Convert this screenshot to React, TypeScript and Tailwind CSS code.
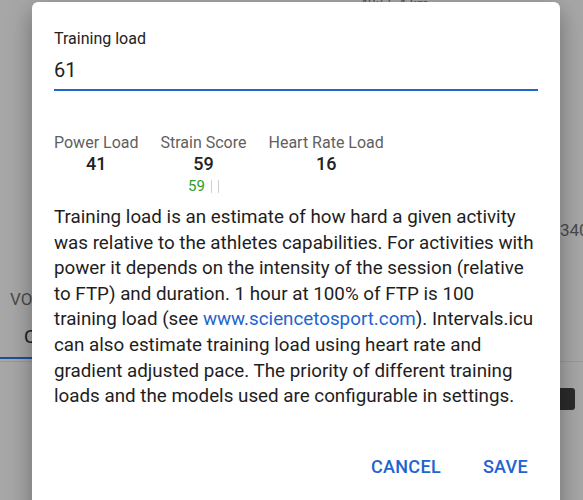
import React from 'react';

const font = { fontFamily: 'Roboto, "Noto Sans", sans-serif' };

function Stat({ label, value, extra }: { label: string; value: string; extra?: React.ReactNode }) {
  return (
    <div className="flex flex-col items-center">
      <div className="text-[16px] leading-[20px] text-[#5f5f5f]">{label}</div>
      <div className="text-[18px] leading-[22px] font-medium text-[#222]">{value}</div>
      {extra}
    </div>
  );
}

export default function App() {
  return (
    <div className="relative w-[583px] h-[500px] overflow-hidden bg-[#a7a7a7]" style={font}>
      {/* dimmed page behind the dialog */}
      <div className="absolute left-[360px] -top-[6px] text-[14px] text-[#555]">48:55 4 km</div>
      <div className="absolute left-[560px] top-[218px] text-[17px] text-[#4a4a4a]">340</div>
      <div className="absolute left-[10px] top-[287px] text-[17px] text-[#4a4a4a]">VO</div>
      <div className="absolute left-[24px] top-[323px] text-[19px] text-[#1a1a1a]">C</div>
      <div className="absolute left-0 top-[357px] w-[32px] h-[2px] bg-[#1f4f9a]" />
      <div className="absolute left-0 top-[361px] w-[583px] h-px bg-[#9a9a9a]" />
      <div className="absolute left-[556px] top-[388px] w-[19px] h-[22px] rounded-[3px] bg-[#2b2b2b]" />

      <div className="absolute left-[32px] top-[2px] w-[528px] h-[520px] bg-white rounded-[6px] shadow-[0_8px_24px_rgba(0,0,0,0.35)]">
        <div className="px-[22px] pt-[27px]">
          <div className="text-[16px] leading-[20px] text-[#222]">Training load</div>
          <div className="mt-[7px] pb-[5px] border-b-2 border-[#2164d0] text-[20px] leading-[28px] text-[#222]">61</div>

          <div className="mt-[42px] flex gap-[22px] items-start">
            <Stat label="Power Load" value="41" />
            <Stat
              label="Strain Score"
              value="59"
              extra={
                <div className="mt-[2px] flex items-center gap-[6px] text-[15px] leading-[18px]">
                  <span className="text-[#2a9d2a]">59</span>
                  <span className="w-px h-[13px] bg-[#cfcfcf]" />
                  <span className="w-px h-[13px] bg-[#cfcfcf]" />
                </div>
              }
            />
            <Stat label="Heart Rate Load" value="16" />
          </div>

          <p className="mt-[10px] text-[18.8px] leading-[25.6px] text-[#1e1e1e]">
            Training load is an estimate of how hard a given activity was relative to the athletes capabilities. For
            activities with power it depends on the intensity of the session (relative to FTP) and duration. 1 hour at
            100% of FTP is 100 training load (see <span className="text-[#2164d0]">www.sciencetosport.com</span>).
            Intervals.icu can also estimate training load using heart rate and gradient adjusted pace. The priority of
            different training loads and the models used are configurable in settings.
          </p>
        </div>

        <div className="mt-[39px] flex justify-end gap-[10px] pr-[16px]">
          <button className="px-[16px] py-[6px] text-[18px] leading-[24px] font-medium tracking-[0.3px] text-[#2164d0]">
            CANCEL
          </button>
          <button className="px-[16px] py-[6px] text-[18px] leading-[24px] font-medium tracking-[0.3px] text-[#2164d0]">
            SAVE
          </button>
        </div>
      </div>
    </div>
  );
}
